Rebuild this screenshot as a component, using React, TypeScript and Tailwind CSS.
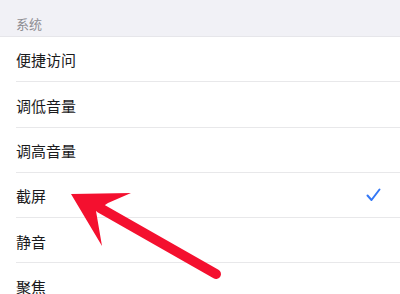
import React from "react"

const rows = ["便捷访问", "调低音量", "调高音量", "截屏", "静音", "聚焦"]

export default function App() {
  return (
    <div
      className="relative w-[400px] h-[294px] overflow-hidden bg-white"
      style={{ fontFamily: '"Noto Sans", "Noto Sans CJK SC", sans-serif' }}
    >
      {/* section header */}
      <div className="h-[37px] bg-[#f1f1f6] border-b border-[#e6e6ea] pt-[17px] pl-4">
        <div className="text-[13px] leading-[14px] text-[#8d8d92]">系统</div>
      </div>

      {/* list */}
      <div className="pl-4">
        {rows.map((label) => (
          <div
            key={label}
            className="h-[45.3px] flex items-center justify-between pr-5 pt-[3px] border-b border-[#e8e8ea]"
          >
            <span className="text-[15px] text-[#1a1a1c]">{label}</span>
            {label === "截屏" && (
              <svg width="15" height="14" viewBox="0 0 15 14" className="mr-[-1px] -mt-[3px]">
                <polyline
                  points="1.5,7.5 5.5,12 13.5,1.5"
                  fill="none"
                  stroke="#3478f6"
                  strokeWidth="2"
                  strokeLinecap="round"
                  strokeLinejoin="round"
                />
              </svg>
            )}
          </div>
        ))}
      </div>

      {/* annotation arrow */}
      <svg
        className="absolute left-0 top-0 pointer-events-none"
        width="400"
        height="294"
        viewBox="0 0 400 294"
      >
        <line x1="100" y1="208" x2="216" y2="274" stroke="#f4102f" strokeWidth="10" strokeLinecap="round" />
        <polygon points="71,194 131,193 108,203 96,211 102,246" fill="#f4102f" />
      </svg>
    </div>
  )
}
